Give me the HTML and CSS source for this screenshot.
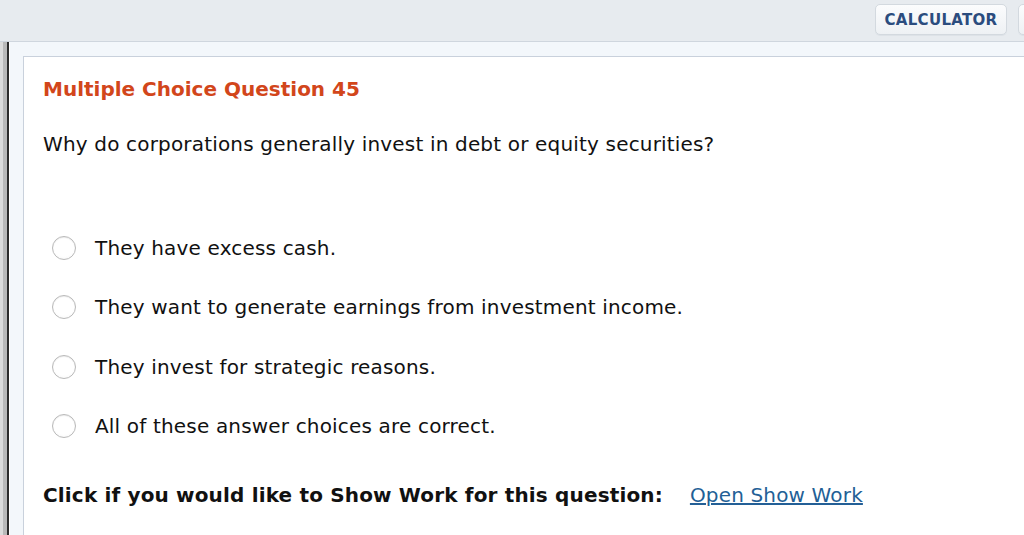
FILE: index.html
```html
<!DOCTYPE html>
<html>
<head>
<meta charset="utf-8">
<link rel="stylesheet" href="styles.css">
</head>
<body>
<div class="topbar">
  <button class="tool-btn">CALCULATOR</button>
  <button class="tool-btn stub"></button>
</div>
<div class="main">
  <div class="rail"><span class="r1"></span><span class="r2"></span><span class="r3"></span><span class="r4"></span></div>
  <div class="panel">
    <div class="card">
      <h2 class="title">Multiple Choice Question 45</h2>
      <p class="question">Why do corporations generally invest in debt or equity securities?</p>
      <ul class="choices">
        <li><span class="radio"></span><span>They have excess cash.</span></li>
        <li><span class="radio"></span><span>They want to generate earnings from investment income.</span></li>
        <li><span class="radio"></span><span>They invest for strategic reasons.</span></li>
        <li><span class="radio"></span><span>All of these answer choices are correct.</span></li>
      </ul>
      <div class="showwork">
        <span class="sw-label">Click if you would like to Show Work for this question:</span>
        <a class="sw-link" href="#">Open Show Work</a>
      </div>
    </div>
  </div>
</div>
</body>
</html>
```
FILE: styles.css
```css
html, body {
  margin: 0;
  padding: 0;
  height: 100%;
  overflow: hidden;
  background: #ffffff;
  font-family: "DejaVu Sans", Verdana, sans-serif;
}
.topbar {
  height: 42px;
  background: #e7ebef;
  border-bottom: 1px solid #cfd6de;
  display: flex;
  justify-content: flex-end;
  align-items: flex-start;
  gap: 11px;
  padding-top: 4px;
  box-sizing: border-box;
  overflow: hidden;
}
.tool-btn {
  height: 31px;
  width: 132px;
  border: 1px solid #d3d9df;
  border-radius: 5px;
  background: linear-gradient(#fbfcfd, #eef1f4);
  color: #2b4c7e;
  font-family: "DejaVu Sans", Verdana, sans-serif;
  font-weight: bold;
  font-size: 15px;
  letter-spacing: 0.3px;
  padding: 0;
  box-shadow: 0 1px 0 #dde2e7;
}
.tool-btn.stub {
  width: 20px;
  margin-right: -14px;
}
.main {
  display: flex;
  height: calc(100% - 42px);
}
.rail {
  display: flex;
  flex: none;
}
.rail span { display: block; height: 100%; }
.rail .r1 { width: 3px; background: #dcdcdc; }
.rail .r2 { width: 4px; background: #b9b9b9; }
.rail .r3 { width: 2px; background: #2c2c2c; }
.rail .r4 { width: 1px; background: #ffffff; }
.panel {
  flex: 1;
  background: #f3f7fb;
  padding: 14px 0 0 13px;
}
.card {
  background: #ffffff;
  border-top: 1px solid #c9d1dc;
  border-left: 1px solid #c9d1dc;
  height: 100%;
  padding: 20px 0 0 19px;
  box-sizing: border-box;
}
.title {
  margin: 0;
  color: #d2461b;
  font-size: 20px;
  font-weight: bold;
  line-height: 24px;
}
.question {
  margin: 31px 0 0;
  font-size: 20px;
  letter-spacing: 0.17px;
  line-height: 24px;
  color: #111;
}
.choices {
  list-style: none;
  margin: 80px 0 0;
  padding: 0 0 0 9px;
  display: flex;
  flex-direction: column;
  gap: 35.3px;
}
.choices li {
  display: flex;
  align-items: center;
  height: 24px;
  font-size: 20px;
  letter-spacing: 0.17px;
  color: #111;
}
.radio {
  width: 22px;
  height: 22px;
  border-radius: 50%;
  border: 1px solid #b9b9b9;
  background: radial-gradient(circle at 50% 40%, #ffffff 60%, #f3f3f3 100%);
  box-shadow: inset 0 1px 1px rgba(0,0,0,0.08);
  margin-right: 19px;
  flex: none;
}
.showwork {
  margin-top: 45px;
  display: flex;
  align-items: baseline;
  font-size: 20px;
  letter-spacing: 0.16px;
  line-height: 24px;
}
.sw-label {
  font-weight: bold;
  color: #111;
}
.sw-link {
  margin-left: 27px;
  color: #235f96;
  text-decoration: underline;
}
```
